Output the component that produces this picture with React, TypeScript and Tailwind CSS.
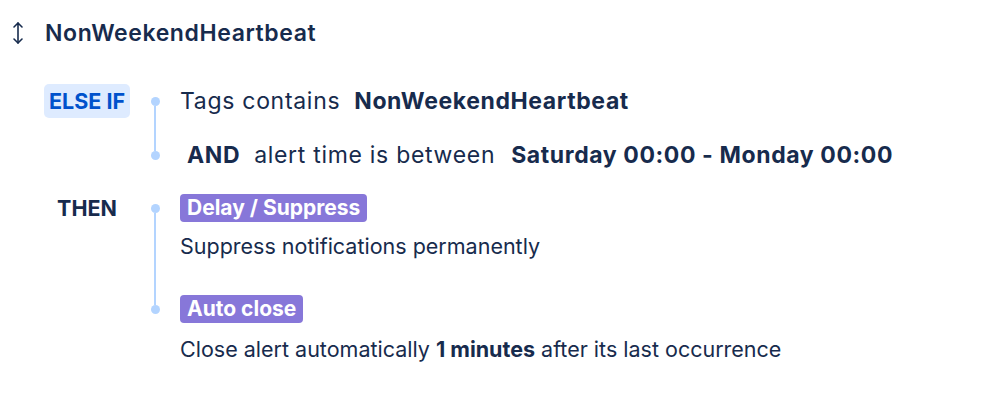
import React from 'react';
import { MoveVertical } from 'lucide-react';

const font = { fontFamily: 'Inter, "Noto Sans", sans-serif' };

// one step on the timeline: dot lines up with the first line of the content
function Step({ first, last, children, top }: { first?: boolean; last?: boolean; top: string; children: React.ReactNode }) {
  return (
    <div className="flex">
      <div className="w-[50px] flex flex-col items-center">
        <div className={`${top} w-[2px] ${first ? 'bg-transparent' : 'bg-[#b3d4ff]'}`} />
        <div className="w-[9px] h-[9px] rounded-full bg-[#b3d4ff]" />
        <div className={`flex-1 w-[2px] ${last ? 'bg-transparent' : 'bg-[#b3d4ff]'}`} />
      </div>
      <div className="flex-1">{children}</div>
    </div>
  );
}

function Tag({ children }: { children: React.ReactNode }) {
  return (
    <span className="inline-block bg-[#8777d9] text-white font-bold text-[21px] leading-[28px] px-[7px] rounded-[4px]">
      {children}
    </span>
  );
}

export default function App() {
  return (
    <div className="w-[999px] h-[400px] bg-white text-[#172b4d] pt-[17px] pl-[6px]" style={font}>
      <div className="flex items-center h-[32px]">
        <MoveVertical size={24} strokeWidth={1.6} className="text-[#172b4d]" />
        <h1 className="ml-[15px] text-[23px] font-semibold tracking-[0.6px]">NonWeekendHeartbeat</h1>
      </div>

      <div className="ml-[38px] mt-[35px]">
        {/* condition */}
        <div className="flex">
          <div className="w-[86px]">
            <div className="h-[34px] flex items-center justify-center bg-[#deebff] text-[#0052cc] font-bold text-[21.5px] rounded-[5px]">
              ELSE IF
            </div>
          </div>
          <div className="flex-1">
            <Step first top="h-[13px]">
              <div className="h-[34px] pb-[20px] box-content flex items-center text-[23px]">
                <span className="tracking-[0.7px]">Tags contains</span>
                <b className="ml-[14px] font-bold text-[23px] tracking-[0.6px]">NonWeekendHeartbeat</b>
              </div>
            </Step>
            <Step last top="h-[13px]">
              <div className="h-[34px] flex items-center text-[23px]">
                <b className="ml-[7px] font-bold tracking-[0.6px]">AND</b>
                <span className="ml-[14px] tracking-[0.7px]">alert time is between</span>
                <b className="ml-[16px] font-bold tracking-[0.6px]">Saturday 00:00 - Monday 00:00</b>
              </div>
            </Step>
          </div>
        </div>

        {/* actions */}
        <div className="flex mt-[22px]">
          <div className="w-[86px]">
            <div className="h-[28px] flex items-center justify-center font-bold text-[21.5px]">THEN</div>
          </div>
          <div className="flex-1">
            <Step first top="h-[10px]">
              <div className="pb-[35px]">
                <Tag>Delay / Suppress</Tag>
                <p className="mt-[10px] text-[21.5px] leading-[28px]">Suppress notifications permanently</p>
              </div>
            </Step>
            <Step last top="h-[10px]">
              <div>
                <Tag>Auto close</Tag>
                <p className="mt-[12px] text-[21.5px] leading-[28px]">
                  Close alert automatically <b className="font-bold">1 minutes</b> after its last occurrence
                </p>
              </div>
            </Step>
          </div>
        </div>
      </div>
    </div>
  );
}
